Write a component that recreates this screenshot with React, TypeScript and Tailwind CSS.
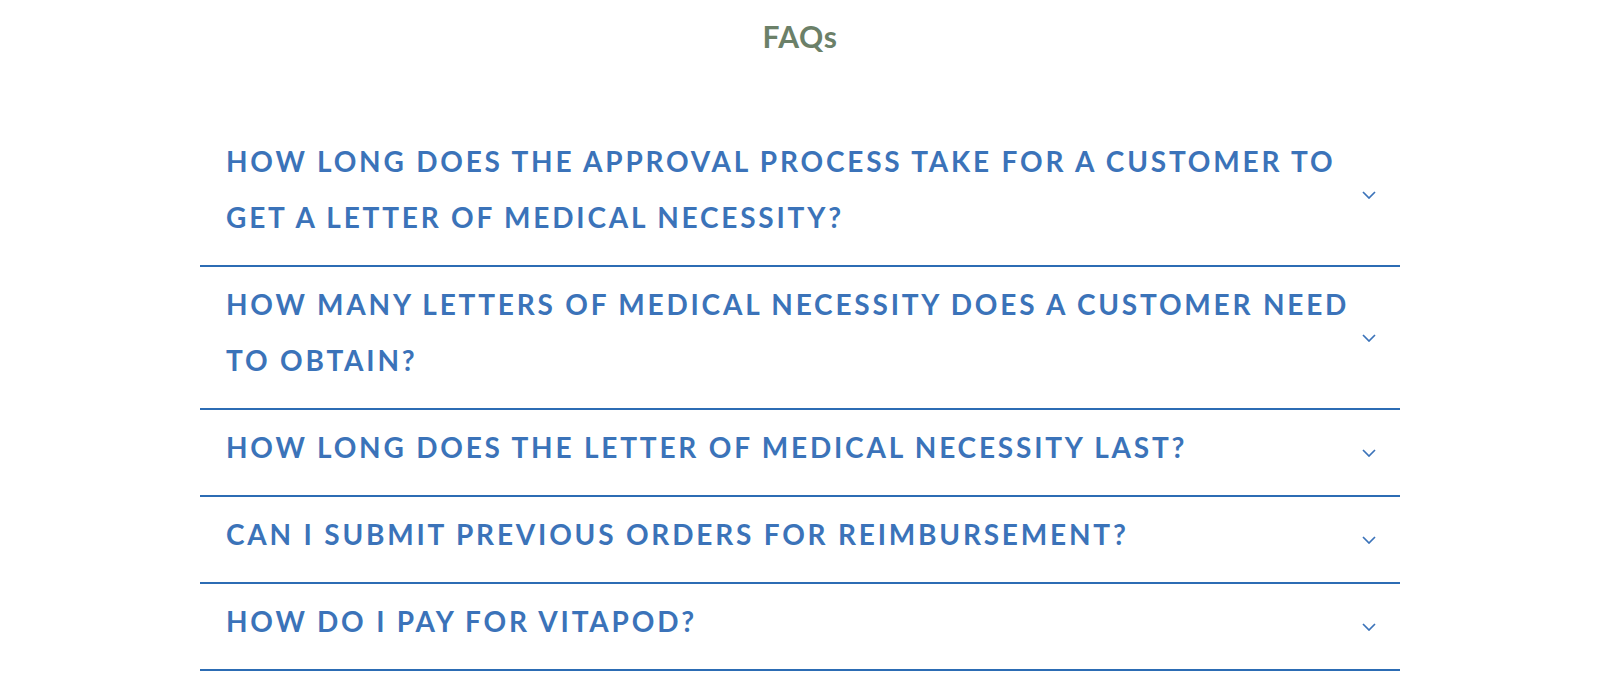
import { useState } from "react";

const FAQS = [
  {
    q: "How long does the approval process take for a customer to get a letter of medical necessity?",
    a: "Most customers receive their letter within a few business days after completing the health questionnaire.",
  },
  {
    q: "How many letters of medical necessity does a customer need to obtain?",
    a: "One letter covers all eligible purchases for the length of its validity.",
  },
  {
    q: "How long does the letter of medical necessity last?",
    a: "A letter is valid for twelve months from the date it is issued.",
  },
  {
    q: "Can I submit previous orders for reimbursement?",
    a: "Yes, orders placed within the letter's validity window can be submitted.",
  },
  {
    q: "How do I pay for Vitapod?",
    a: "Use your HSA or FSA card at checkout, or pay by card and submit for reimbursement.",
  },
];

function Chevron({ open }: { open: boolean }) {
  return (
    <svg
      width="14"
      height="8"
      viewBox="0 0 14 8"
      fill="none"
      className={`mt-[11px] shrink-0 transition-transform ${open ? "rotate-180" : ""}`}
    >
      <path d="M1 1l6 6 6-6" stroke="#3b73b9" strokeWidth="1.7" />
    </svg>
  );
}

export default function App() {
  const [open, setOpen] = useState<number | null>(null);

  return (
    <div className="min-h-[700px] bg-white font-['Lato',sans-serif]">
      <h2 className="pt-[17px] text-center text-[30px] leading-[38px] font-bold tracking-[0.02em] text-[#6b8068]">
        FAQs
      </h2>

      <div className="mx-auto mt-[69px] w-[1200px]">
        {FAQS.map((item, i) => (
          <div key={item.q} className="border-b-2 border-[#2c6cb4]">
            <button
              onClick={() => setOpen(open === i ? null : i)}
              className="flex w-full items-center justify-between pt-[9px] pb-[20px] pl-[26px] pr-[24px] text-left"
            >
              <span className="max-w-[1130px] text-[28px] leading-[56px] font-bold uppercase tracking-[0.1em] text-[#3b73b9]">
                {item.q}
              </span>
              <Chevron open={open === i} />
            </button>
            {open === i && (
              <p className="px-[26px] pb-6 text-lg text-[#4a4a4a]">{item.a}</p>
            )}
          </div>
        ))}
      </div>
    </div>
  );
}
